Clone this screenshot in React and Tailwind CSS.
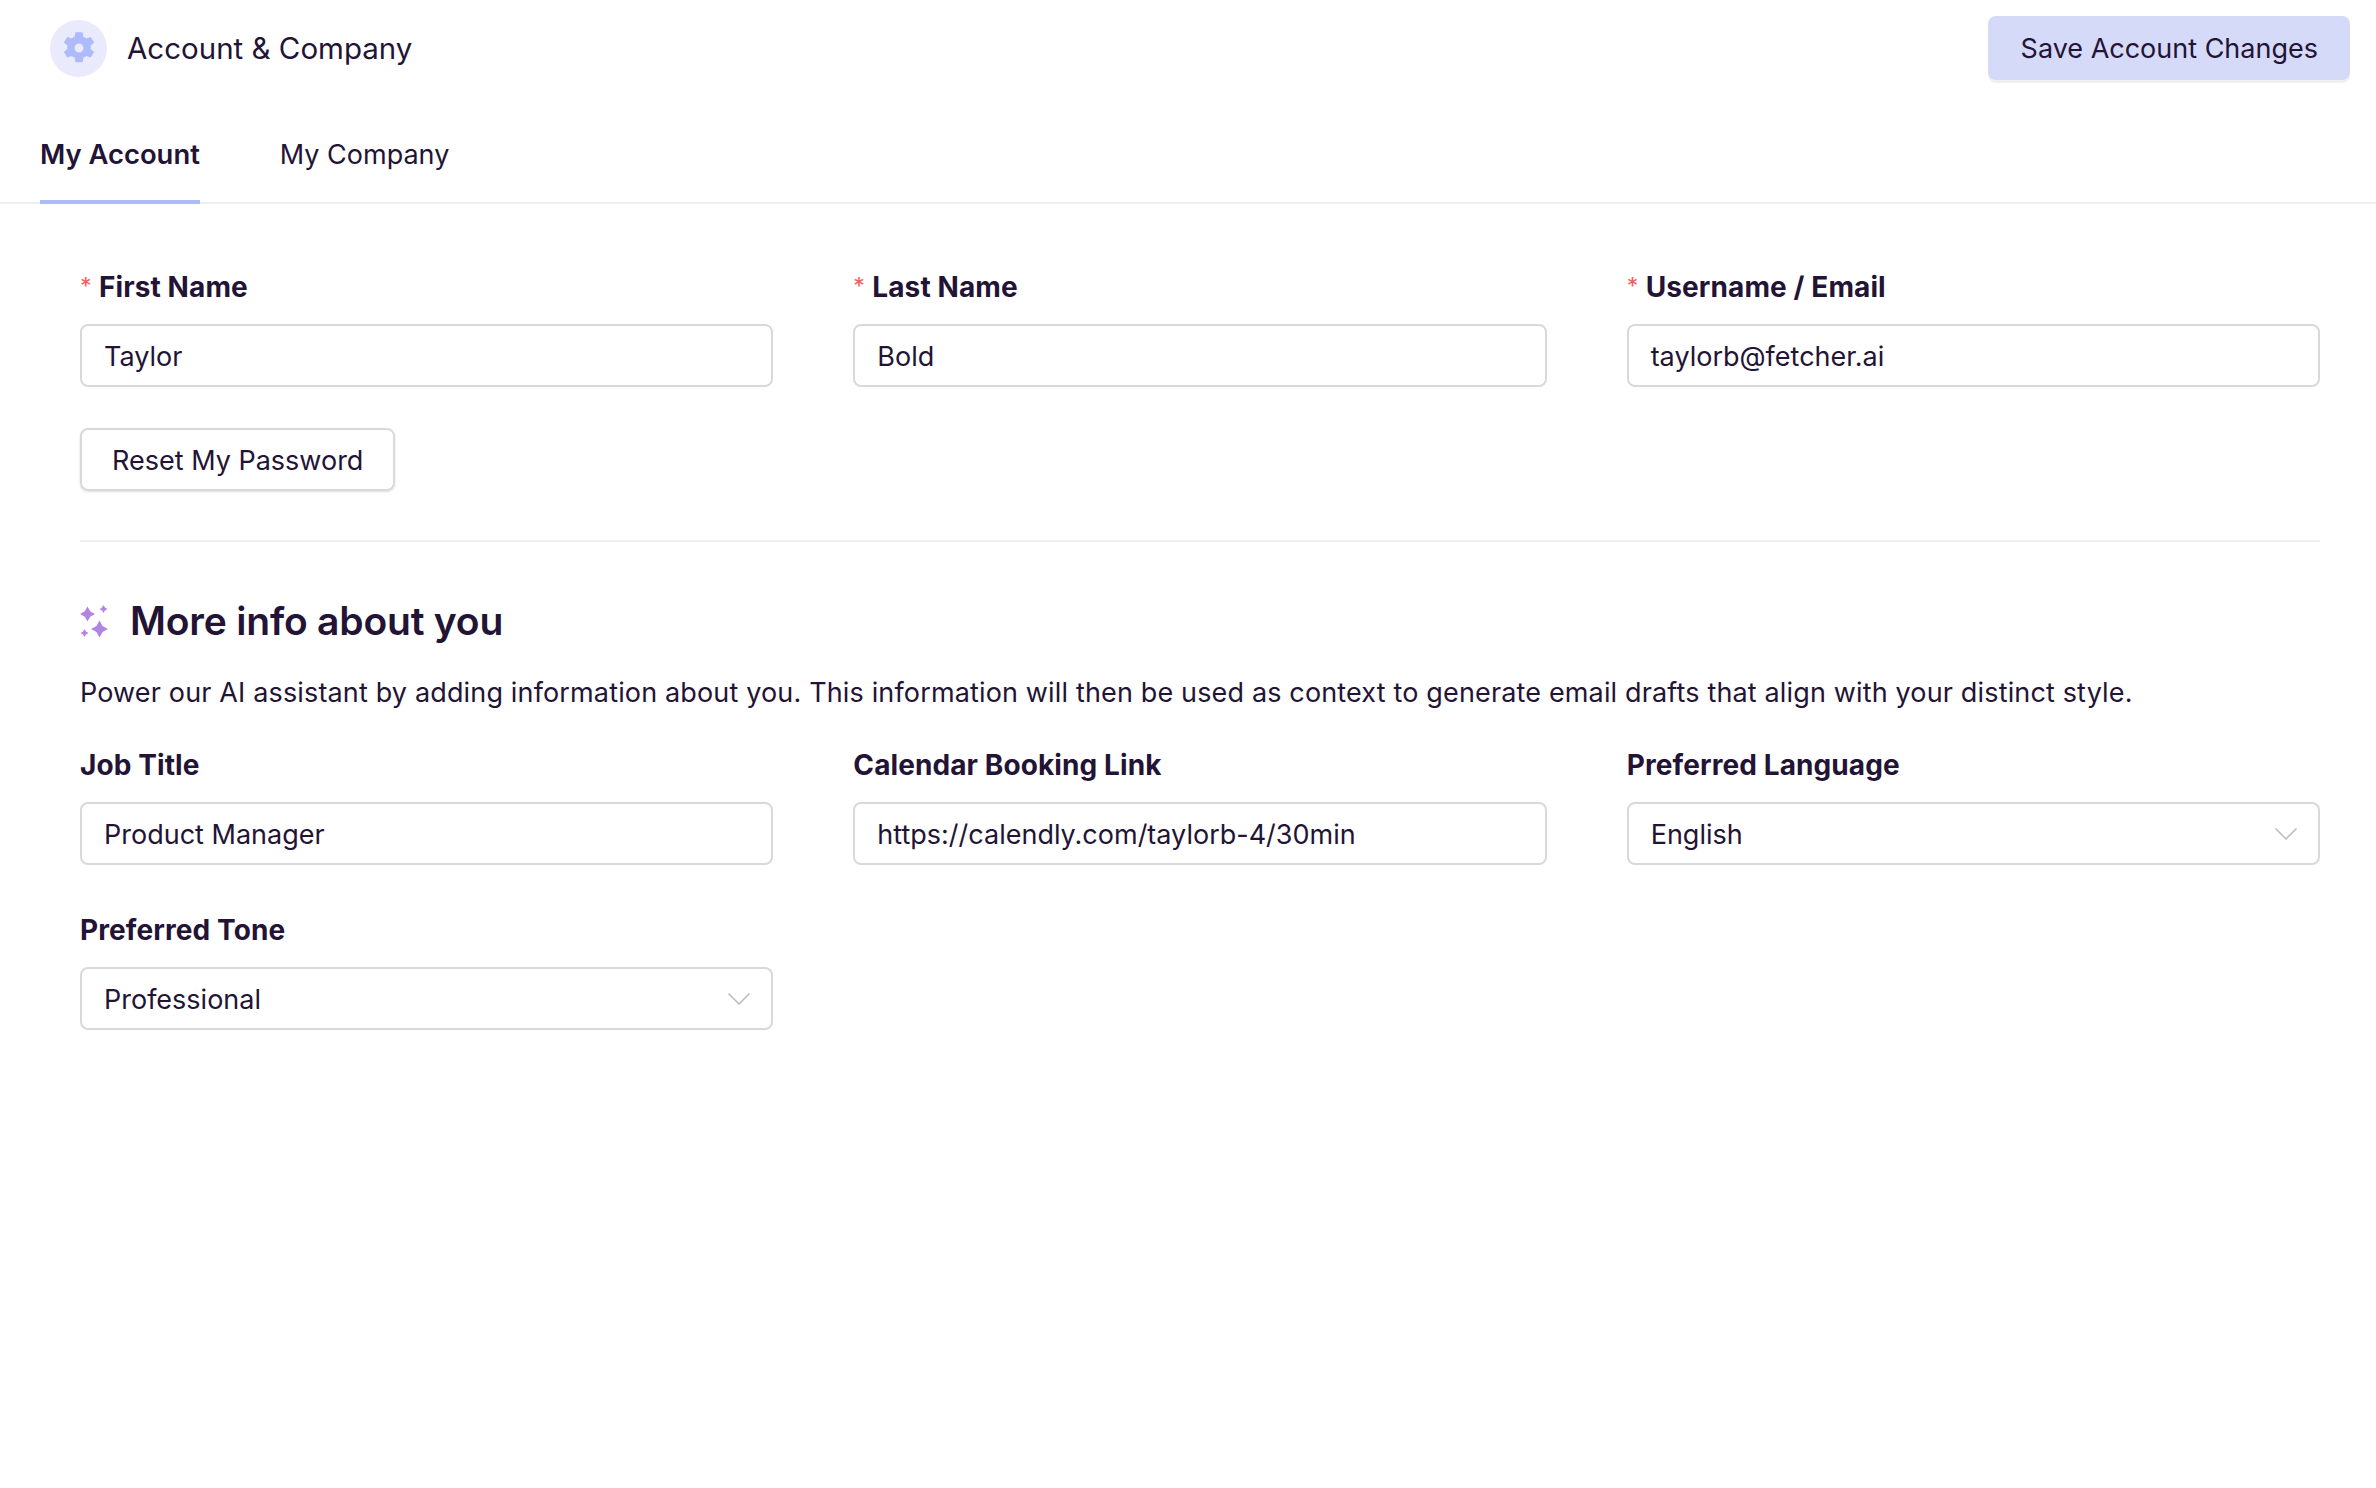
import React from 'react';
import { ChevronDown } from 'lucide-react';

const ink = 'text-[#231436]';

const Gear = () => (
  <svg viewBox="0 0 24 24" className="w-[36px] h-[36px]" fill="#aebbfb">
    <path fillRule="evenodd" d="M9.600 1.500h4.800l.5 3a8 8 0 0 1 2 1.150l2.900-1 2.300 3.700-2.300 2a8 8 0 0 1 0 2.300l2.300 2-2.300 3.700-2.900-1a8 8 0 0 1-2 1.150l-.5 3H9.600l-.5-3a8 8 0 0 1-2-1.150l-2.900 1-2.300-3.700 2.300-2a8 8 0 0 1 0-2.300l-2.300-2 2.300-3.700 2.900 1a8 8 0 0 1 2-1.150l.5-3zM12 9a3 3 0 1 0 0 6 3 3 0 0 0 0-6z" />
  </svg>
);

const star = (cx, cy, r) => {
  const k = r * 0.36;
  return `${cx},${cy - r} ${cx + k},${cy - k} ${cx + r},${cy} ${cx + k},${cy + k} ${cx},${cy + r} ${cx - k},${cy + k} ${cx - r},${cy} ${cx - k},${cy - k}`;
};

const Sparkles = () => (
  <svg viewBox="0 0 28 34" className="w-[28px] h-[34px] shrink-0" fill="#b384e4">
    <polygon points={star(7.5, 10, 7.5)} />
    <polygon points={star(23.5, 5, 4)} />
    <polygon points={star(19.5, 25, 8.5)} />
    <polygon points={star(4.5, 29, 4)} />
  </svg>
);

const Field = ({ label, value, required, select }) => (
  <div className="flex flex-col">
    <label className={`text-[28px] tracking-[0.1px] leading-[40px] font-[650] ${ink} flex`}>
      {required && <span className="text-[#f0605c] text-[23px] leading-[38px] font-normal w-[19px]">*</span>}
      {label}
    </label>
    <div className={`mt-[17px] h-[63px] border-2 border-[#d9d9d9] rounded-[8px] pl-[22px] pr-[12px] flex items-center justify-between bg-white text-[27px] ${ink}`}>
      <span className="pt-[4px]">{value}</span>
      {select && <ChevronDown className="w-[40px] h-[40px] text-[#bdbdbd]" strokeWidth={1} />}
    </div>
  </div>
);

export default function App() {
  return (
    <div className="min-h-screen bg-white font-['Inter',sans-serif]">
      <header className="h-[96px] pl-[50px] pr-[26px] flex items-center justify-between">
        <div className="flex items-center gap-[20px]">
          <div className="w-[57px] h-[57px] rounded-full bg-[#e9ebfd] flex items-center justify-center">
            <Gear />
          </div>
          <h1 className={`text-[29.5px] font-normal ${ink}`}>Account &amp; Company</h1>
        </div>
        <button className={`h-[64px] pt-[2px] pl-[33px] pr-[32px] rounded-[8px] bg-[#d5daf9] text-[27px] ${ink} shadow-[0_3px_0_#f0f0f0]`}>
          Save Account Changes
        </button>
      </header>

      <nav className="h-[108px] pl-[40px] flex gap-[80px] border-b-2 border-[#f0f0f0]">
        <div className={`h-[108px] pt-[14px] border-b-4 border-[#aebbfb] flex items-center text-[27.4px] font-semibold ${ink}`}>My Account</div>
        <div className={`h-[108px] pt-[14px] border-b-4 border-transparent flex items-center text-[27px] ${ink}`}>My Company</div>
      </nav>

      <main className="pl-[80px] pr-[56px] pt-[63px]">
        <div className="grid grid-cols-3 gap-x-[80px]">
          <Field label="First Name" value="Taylor" required />
          <Field label="Last Name" value="Bold" required />
          <Field label="Username / Email" value="taylorb@fetcher.ai" required />
        </div>
        <button className={`block mt-[41px] h-[63px] pt-[4px] px-[30px] border-2 border-[#d9d9d9] rounded-[8px] text-[27px] ${ink} shadow-sm`}>
          Reset My Password
        </button>
        <div className="mt-[49px] border-t-2 border-[#f0f0f0]" />
        <div className="mt-[55px] flex items-center gap-[22px]">
          <Sparkles />
          <h2 className={`text-[39px] tracking-[-0.2px] leading-[48px] font-semibold ${ink}`}>More info about you</h2>
        </div>
        <p className={`mt-[28px] text-[27px] tracking-[0.15px] leading-[40px] ${ink}`}>
          Power our AI assistant by adding information about you. This information will then be used as context to generate email drafts that align with your distinct style.
        </p>
        <div className="mt-[32px] grid grid-cols-3 gap-x-[80px] gap-y-[45px]">
          <Field label="Job Title" value="Product Manager" />
          <Field label="Calendar Booking Link" value="https://calendly.com/taylorb-4/30min" />
          <Field label="Preferred Language" value="English" select />
          <Field label="Preferred Tone" value="Professional" select />
        </div>
      </main>
    </div>
  );
}
